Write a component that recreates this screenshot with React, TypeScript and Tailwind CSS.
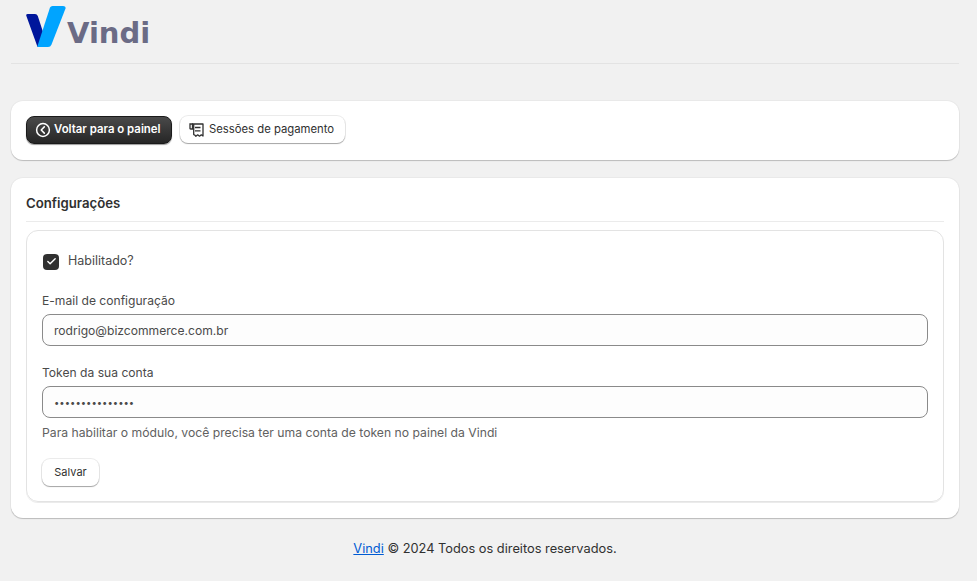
import { Check } from 'lucide-react';

function Logo() {
  return (
    <svg width="42" height="42" viewBox="0 0 42 42" className="block shrink-0">
      <path d="M1.2 9.5 Q0.8 8 2.5 8 L10 8 Q12 8 12.8 10 L18 26 L13 41 Q12.5 41 12 39.5 Z" fill="#00169b" />
      <path d="M25 1.5 Q25.7 0 27.5 0 L38 0 Q41 0 40.5 2.5 L26.5 38.5 Q25.5 41 23 41 L13 41 Q12.3 41 12.5 40 Z" fill="#00a4ff" />
    </svg>
  );
}

function ReceiptIcon() {
  return (
    <svg width="16" height="16" viewBox="0 0 16 16" fill="none" stroke="currentColor" strokeWidth="1.3" className="shrink-0">
      <path d="M1 2h2.5v5H1.6Q1 7 1 6.4Z" />
      <path d="M3.5 2H14v12l-1.7-1.2-1.8 1.4-1.8-1.4-1.8 1.4-1.2-1.2-1-.4V2Z" strokeLinejoin="round" />
      <path d="M6 5.5h5.5M6 8.8h5.5" />
    </svg>
  );
}

function BackIcon() {
  return (
    <svg width="16" height="16" viewBox="0 0 16 16" fill="none" stroke="currentColor" strokeWidth="1.5" className="shrink-0">
      <circle cx="8" cy="8" r="6.4" />
      <path d="M9.3 4.9 6.2 8l3.1 3.1" strokeLinecap="round" strokeLinejoin="round" />
    </svg>
  );
}

function Field({ label, value, type, inputClass }: { label: string; value: string; type: string; inputClass: string }) {
  return (
    <div className="flex flex-col gap-[3px]">
      <label className="text-[12.1px] leading-[20px] text-[#4a4a4a]">{label}</label>
      <input
        type={type}
        defaultValue={value}
        className={`h-[32px] w-full rounded-[8px] border border-[#8a8a8a] bg-[#fdfdfd] px-[11px] text-[#4a4a4a] outline-none ${inputClass}`}
      />
    </div>
  );
}

export default function App() {
  return (
    <div className="min-h-[581px] bg-[#f1f1f1] pl-[11px] pr-[18px] font-['Inter',sans-serif] text-[13px] text-[#303030]">
      <header className="flex h-[64px] items-start border-b border-[#e3e3e3] pl-[14px] pt-[6px]">
        <Logo />
        <span className="ml-[0px] mt-[10px] font-['DejaVu_Sans',sans-serif] text-[29px] leading-[34px] font-bold text-[#6b6b85]">Vindi</span>
      </header>

      <section className="mt-[37px] flex h-[59px] items-center gap-[8px] rounded-[12px] bg-white px-[15px] pb-[2px] shadow-[0_1px_1px_rgba(0,0,0,0.2),0_0_0_1px_rgba(0,0,0,0.03)]">
        <button className="flex h-[28px] w-[146px] items-center gap-[3px] rounded-[8px] border border-[#1a1a1a] bg-gradient-to-b from-[#4a4a4a] to-[#262626] pl-[8px] text-[11.4px] font-semibold whitespace-nowrap text-white shadow-[0_1px_1px_rgba(0,0,0,0.4)]">
          <BackIcon />
          Voltar para o painel
        </button>
        <button className="flex h-[27px] w-[165px] items-center gap-[4px] rounded-[8px] bg-white pl-[9px] text-[11.3px] font-normal whitespace-nowrap text-[#303030] shadow-[0_1px_1px_rgba(0,0,0,0.3),0_0_0_1px_rgba(0,0,0,0.08)]">
          <ReceiptIcon />
          Sessões de pagamento
        </button>
      </section>

      <section className="mt-[18px] h-[340px] rounded-[12px] bg-white px-[15px] pt-[15px] shadow-[0_1px_1px_rgba(0,0,0,0.2),0_0_0_1px_rgba(0,0,0,0.03)]">
        <h2 className="h-[29px] border-b border-[#ebebeb] text-[13.2px] leading-[20px] font-semibold text-[#303030]">Configurações</h2>
        <div className="mt-[8px] flex h-[272px] flex-col rounded-[12px] border border-[#e3e3e3] px-[15px] pt-[22px] shadow-[0_1px_0_rgba(0,0,0,0.08)]">
          <label className="flex h-[17px] items-center gap-[9px] pl-[1px] text-[12.5px] text-[#4a4a4a]">
            <span className="flex h-[16px] w-[16px] items-center justify-center rounded-[4px] bg-[#303030]">
              <Check className="h-[11px] w-[11px] text-white" strokeWidth={3} />
            </span>
            Habilitado?
          </label>
          <div className="mt-[21px]">
            <Field label="E-mail de configuração" value="rodrigo@bizcommerce.com.br" type="text" inputClass="text-[12.1px]" />
          </div>
          <div className="mt-[17px]">
            <Field label="Token da sua conta" value="***************" type="password" inputClass="text-[9.5px]" />
          </div>
          <p className="mt-[5px] text-[12.2px] leading-[20px] text-[#616161]">Para habilitar o módulo, você precisa ter uma conta de token no painel da Vindi</p>
          <div className="mt-[16px]">
            <button className="h-[27px] w-[57px] rounded-[8px] bg-white text-[11px] font-normal text-[#303030] shadow-[0_1px_1px_rgba(0,0,0,0.3),0_0_0_1px_rgba(0,0,0,0.08)]">Salvar</button>
          </div>
        </div>
      </section>

      <footer className="mt-[21px] text-center text-[12.8px] leading-[20px] text-[#303030]">
        <a href="#" className="text-[#005bd3] underline">Vindi</a> © 2024 Todos os direitos reservados.
      </footer>
    </div>
  );
}
